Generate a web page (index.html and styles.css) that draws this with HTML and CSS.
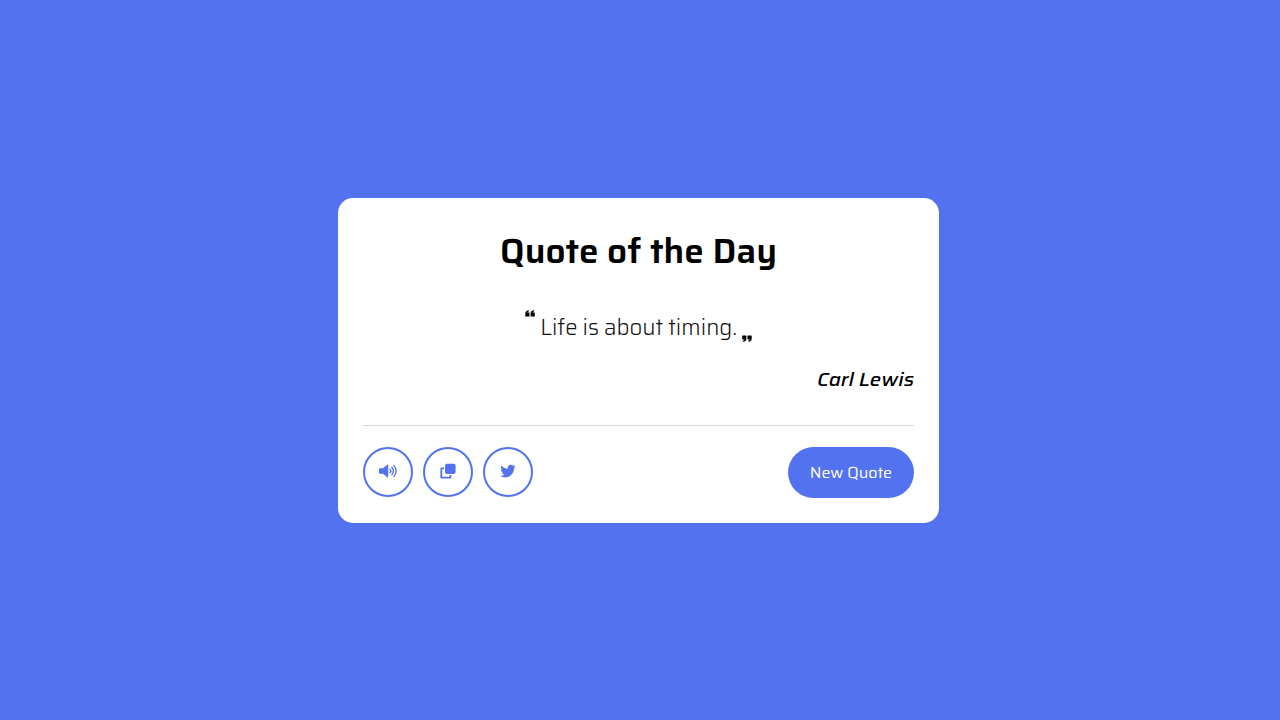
FILE: index.html
```html
<!DOCTYPE html>
<html lang="en">
<head>
<meta charset="utf-8">
<meta name="viewport" content="width=device-width, initial-scale=1">
<title>Quote of the Day</title>
<link rel="stylesheet" href="styles.css">
</head>
<body>
<main class="card">
  <h1 class="title">Quote of the Day</h1>
  <blockquote class="quote">
    <svg class="mark mark-open" viewBox="0 0 10 7" aria-hidden="true"><path d="M3.8 .2V1.5C2.8 1.6 2.4 2 2.3 2.6H4.5V6.2Q4.5 6.6 4 6.6H.8Q.3 6.6.3 6V3.6C.3 1.5 1.6.3 3.8.2ZM9.1.2V1.5C8.1 1.6 7.7 2 7.6 2.6H9.8V6.2Q9.8 6.6 9.3 6.6H6.1Q5.6 6.6 5.6 6V3.6C5.6 1.5 6.9.3 9.1.2Z"/></svg>
    <p class="text">Life is about timing.</p>
    <svg class="mark mark-close" viewBox="0 0 10 7" aria-hidden="true"><path transform="rotate(180 5 3.5)" d="M3.8 .2V1.5C2.8 1.6 2.4 2 2.3 2.6H4.5V6.2Q4.5 6.6 4 6.6H.8Q.3 6.6.3 6V3.6C.3 1.5 1.6.3 3.8.2ZM9.1.2V1.5C8.1 1.6 7.7 2 7.6 2.6H9.8V6.2Q9.8 6.6 9.3 6.6H6.1Q5.6 6.6 5.6 6V3.6C5.6 1.5 6.9.3 9.1.2Z"/></svg>
  </blockquote>
  <p class="author">Carl Lewis</p>
  <footer class="actions">
    <div class="tools">
      <button class="tool" type="button" aria-label="Listen"><svg class="icon" viewBox="0 0 20 16" aria-hidden="true"><path fill="currentColor" d="M2 5.2H5L9.2 1.7Q10.2 1.2 10.2 2.4V13.6Q10.2 14.8 9.2 14.3L5 10.8H2Q1 10.8 1 9.8V6.2Q1 5.2 2 5.2Z"/><path fill="none" stroke="currentColor" stroke-width="1.3" stroke-linecap="round" d="M12 6.2Q13.8 8 12 9.8M13.8 4.2Q17 8 13.8 11.8M15.8 2.4Q20.6 8 15.8 13.6"/></svg></button>
      <button class="tool" type="button" aria-label="Copy"><svg class="icon" viewBox="0 0 20 16" aria-hidden="true"><rect x="7" y=".7" width="10.6" height="10.3" rx="2" fill="currentColor"/><path fill="none" stroke="currentColor" stroke-width="1.8" stroke-linejoin="round" d="M6 5.4H3.3V14.7H12.4V12"/></svg></button>
      <button class="tool" type="button" aria-label="Share on Twitter"><svg class="icon" viewBox="0 0 20 16" aria-hidden="true"><path fill="currentColor" transform="translate(2.2 .4) scale(.03)" d="M459 152c0 4 0 9 0 14 0 139-106 299-299 299-59 0-115-17-161-47 8 1 16 1 25 1 49 0 94-17 130-45-46-1-85-31-98-73 6 1 13 2 20 2 9 0 19-1 28-4-48-10-84-52-84-103v-1c14 8 30 13 47 13-28-19-47-51-47-87 0-19 5-37 14-53 52 64 129 105 217 110-2-8-3-16-3-24 0-58 47-105 105-105 30 0 58 13 77 33 24-5 46-13 67-25-8 24-24 45-46 58 21-2 42-8 60-16-14 21-32 39-52 53z"/></svg></button>
    </div>
    <button class="new-quote" type="button">New Quote</button>
  </footer>
</main>
</body>
</html>
```
FILE: styles.css
```css
* {
  box-sizing: border-box;
  margin: 0;
}

body {
  display: flex;
  align-items: center;
  justify-content: center;
  min-height: 100vh;
  padding: 12px 15px 12px 12px;
  background: #5372f0;
  color: #000;
  font-family: Saira, Roboto, "Liberation Sans", sans-serif;
}

.card {
  width: 100%;
  max-width: 601px;
  padding: 29px 25px 25px;
  border-radius: 15px;
  background: #fff;
}

.title {
  font-size: 35px;
  line-height: 48px;
  font-weight: 600;
  text-align: center;
}

.quote {
  display: flex;
  justify-content: center;
  gap: 5px;
  margin-top: 35px;
}

.text {
  color: #111;
  font-size: 22px;
  line-height: 36px;
  font-weight: 350;
}

.mark {
  flex: none;
  width: 10px;
  height: 7px;
}

.mark-close {
  align-self: flex-end;
  margin-bottom: 4px;
}

.author {
  margin-top: 18px;
  font-size: 20px;
  line-height: 30px;
  font-weight: 500;
  font-style: italic;
  text-align: right;
}

.actions {
  display: flex;
  align-items: center;
  justify-content: space-between;
  margin-top: 31px;
  padding-top: 21px;
  border-top: 1px solid #d9d9d9;
}

.tools {
  display: flex;
  gap: 10px;
}

.tool {
  display: flex;
  align-items: center;
  justify-content: center;
  width: 50px;
  height: 50px;
  padding: 0 0 2px;
  border: 2px solid #5372f0;
  border-radius: 50%;
  background: #fff;
  color: #5372f0;
}

.icon {
  width: 20px;
  height: 16px;
}

.new-quote {
  padding: 13px 22px;
  border: 0;
  border-radius: 30px;
  background: #5372f0;
  color: #fff;
  font: 400 16px/25px Saira, Roboto, "Liberation Sans", sans-serif;
}
```
